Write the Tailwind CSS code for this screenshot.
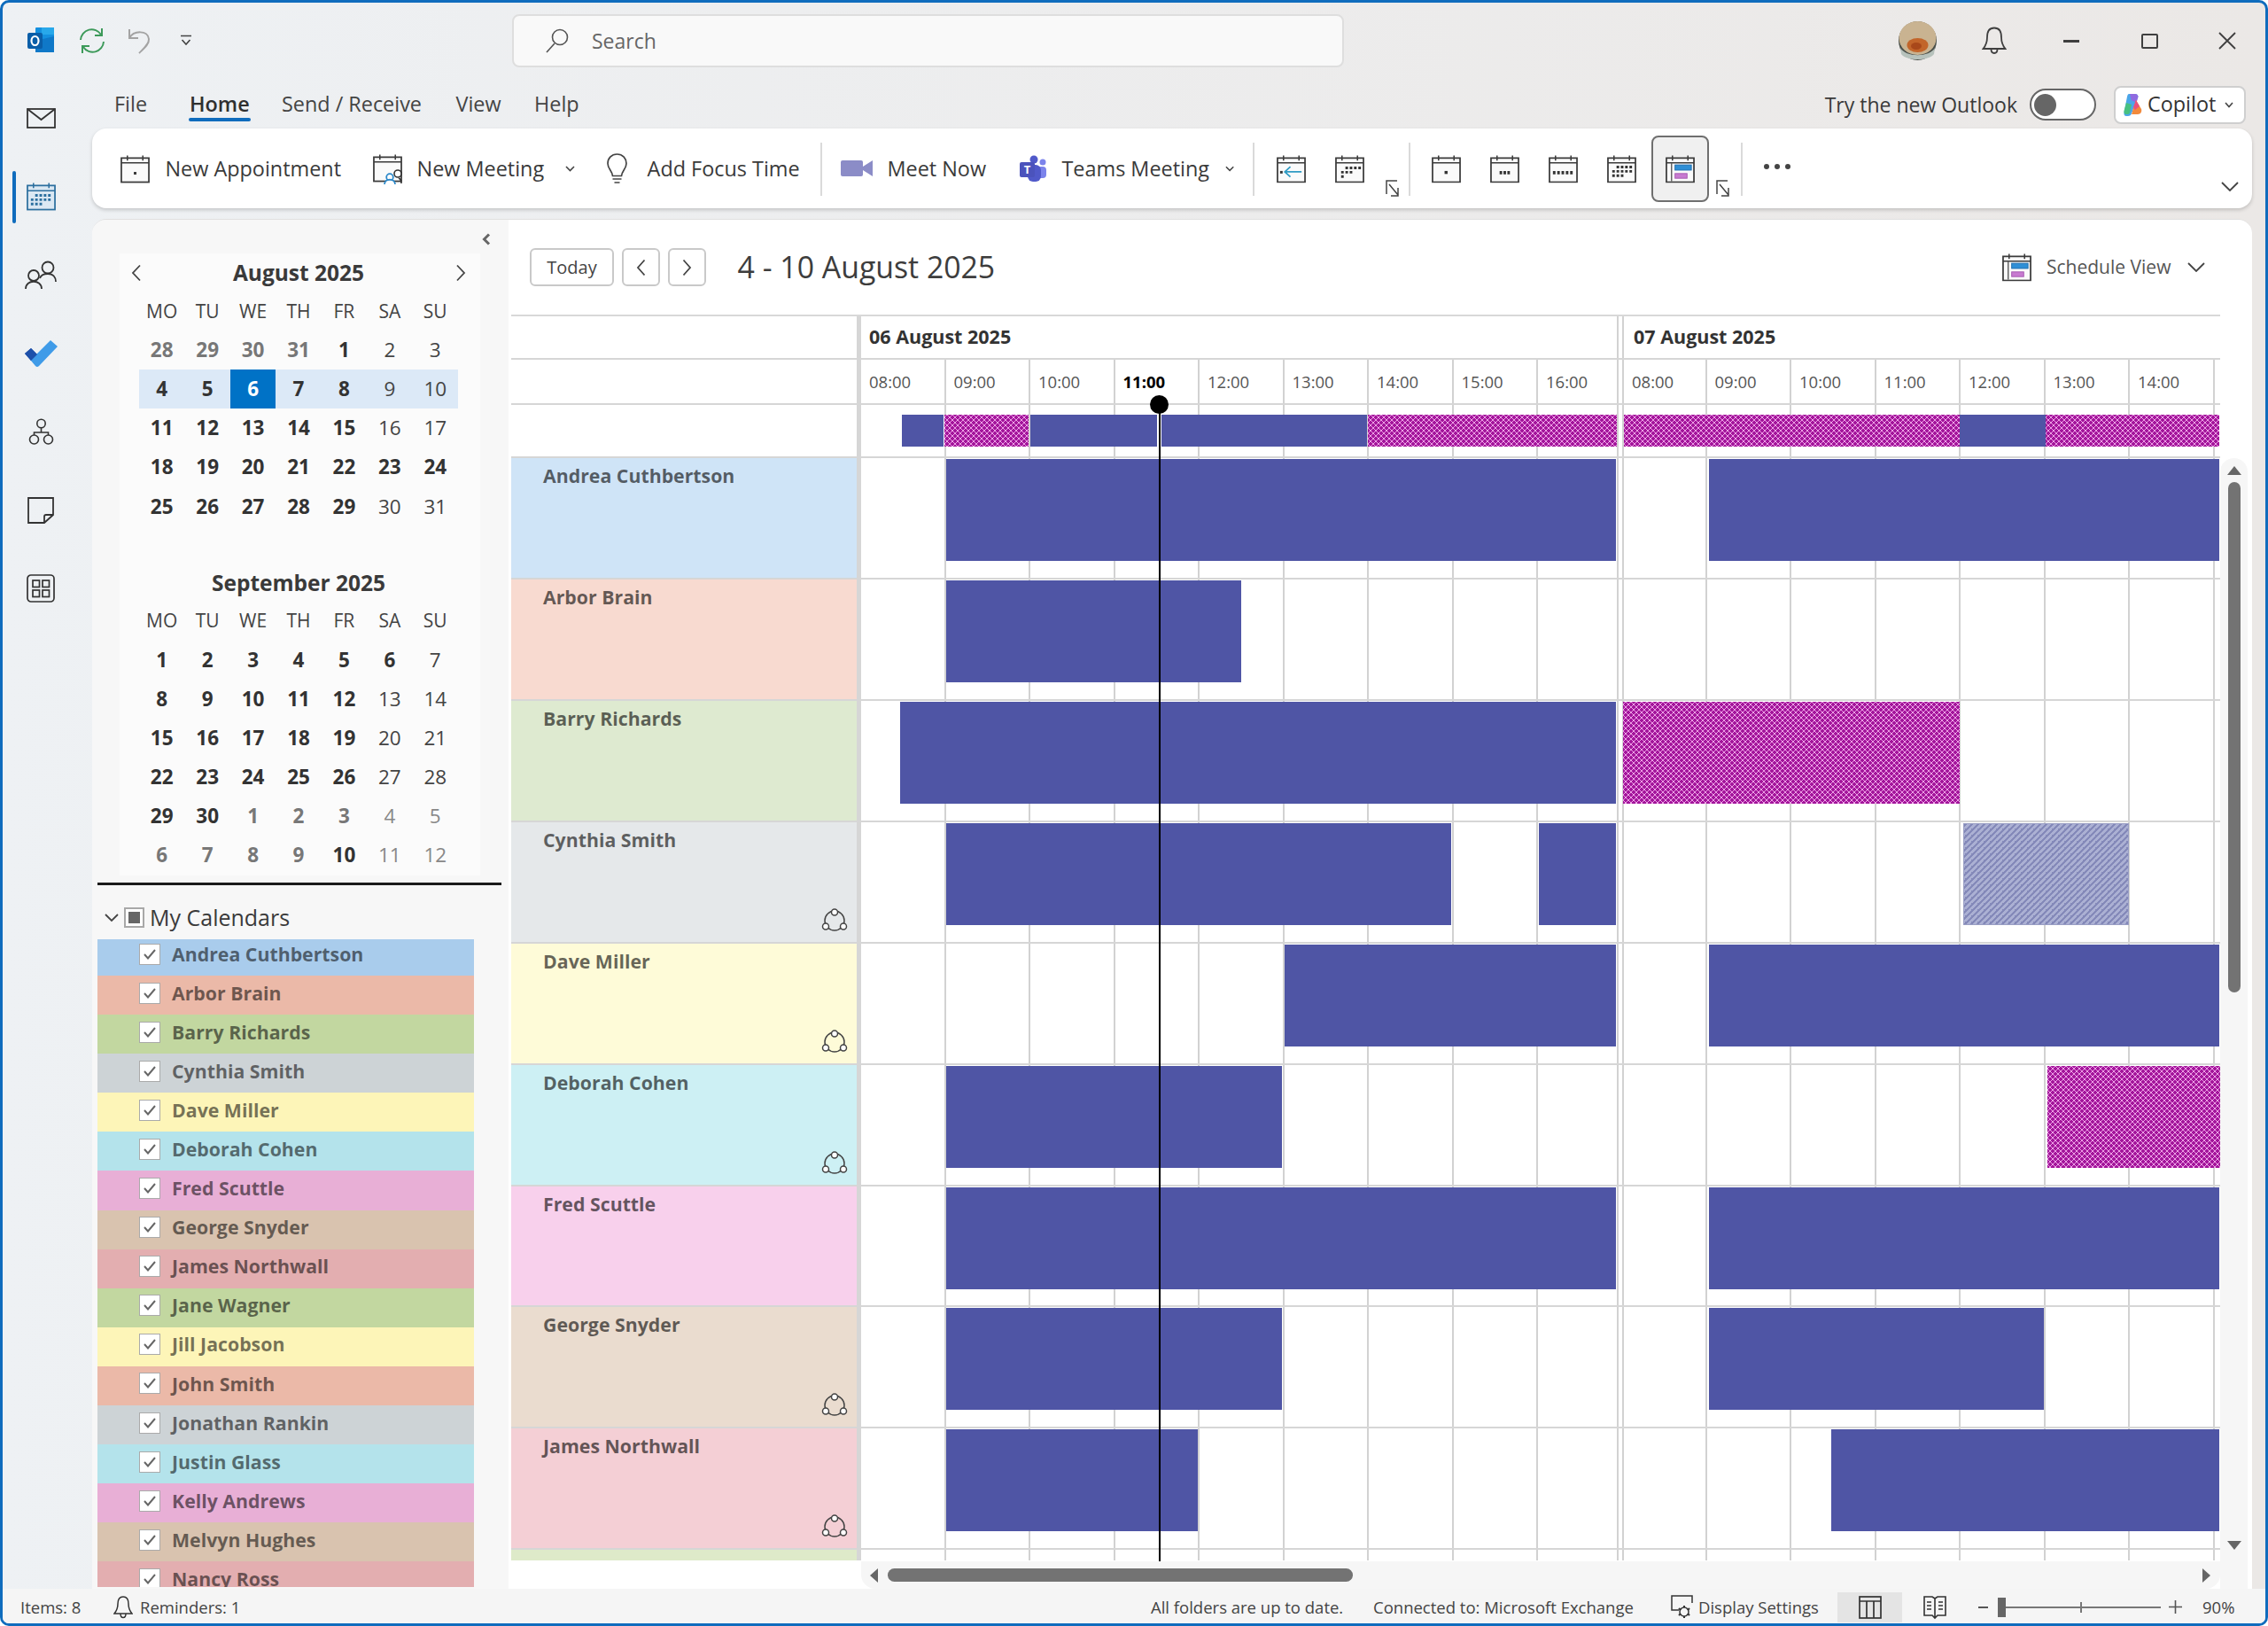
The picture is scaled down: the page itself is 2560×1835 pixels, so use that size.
<!DOCTYPE html>
<html lang="en">
<head>
  <meta charset="UTF-8">
  <title>Calendar - Outlook</title>
  <script src="https://cdn.jsdelivr.net/npm/@tailwindcss/browser@4"></script>
</head>
<body class="bg-white">
  <!-- shared calendar frame for the ribbon icons -->
  <svg class="hidden">
    <symbol id="cal" viewBox="0 0 34 33">
      <rect x="1" y="4" width="32" height="28" fill="#fafafa" stroke="#3b3b3b" stroke-width="1.8"/>
      <path d="M1 9.5h32M8 1v6M26 1v6" fill="none" stroke="#3b3b3b" stroke-width="1.6"/>
    </symbol>
  </svg>

  <div class="w-[2560px] h-[1835px] border-[3px] border-[#0f6cbd] rounded-[10px] overflow-hidden flex flex-col bg-linear-to-r from-[#eef1f4] to-[#ebe8e6] text-[#3a3a3a] [font-family:'Open_Sans','Noto_Sans',sans-serif]">

    <!-- title bar -->
    <div class="h-[86px] shrink-0 flex items-center">
      <svg class="ml-[28px] w-[30px] h-[30px]" viewBox="0 0 30 30">
        <rect x="9" y="0" width="21" height="28" rx="1" fill="#1490df"/>
        <rect x="16" y="0" width="14" height="8" fill="#28a8ea"/>
        <path d="M9 15l21-5v18H9z" fill="#0f78c8"/>
        <rect x="0" y="6" width="17" height="18" rx="2" fill="#0a5ea8"/>
        <ellipse cx="8.5" cy="15" rx="4" ry="5" fill="none" stroke="#fff" stroke-width="2.2"/>
      </svg>
      <svg class="ml-[28px] w-[30px] h-[30px]" viewBox="0 0 30 30" fill="none" stroke="#3d9a5a" stroke-width="2">
        <path d="M2 14a12.500 12.500 0 0 1 23-6M28 16a12.500 12.500 0 0 1-23 6"/>
        <path d="M26 1v8h-8M4 29v-8h8"/>
      </svg>
      <svg class="ml-[25px] w-[26px] h-[30px]" viewBox="0 0 26 30" fill="none" stroke="#a3a3a3" stroke-width="2">
        <path d="M2 2v10h10M2 12C7 3 23 3 24 13c.5 6-6 11-11 16"/>
      </svg>
      <svg class="ml-[33px] w-[14px] h-[14px]" viewBox="0 0 14 14" fill="none" stroke="#444" stroke-width="1.6">
        <path d="M1 1.500h12M2.500 6l4.500 5 4.500-5"/>
      </svg>
      <div class="ml-[361px] w-[939px] h-[60px] flex items-center bg-[#f9f9f9] border-2 border-[#dedede] rounded-lg">
        <svg class="ml-[35px] w-[28px] h-[28px]" viewBox="0 0 28 28" fill="none" stroke="#555" stroke-width="1.6">
          <circle cx="17" cy="10" r="8.500"/>
          <path d="M11 17L2 27"/>
        </svg>
        <span class="ml-[25px] text-[23px] text-[#666]">Search</span>
      </div>
      <svg class="ml-[626px] w-[43px] h-[44px]" viewBox="0 0 43 44">
        <ellipse cx="21.500" cy="22" rx="21.500" ry="22" fill="#4a4f4a"/>
        <ellipse cx="21.500" cy="19" rx="21" ry="19" fill="#c9b391"/>
        <ellipse cx="21.500" cy="27" rx="12" ry="8" fill="#c2652a"/>
        <ellipse cx="20" cy="28" rx="6" ry="4" fill="#a8481a"/>
        <path d="M2 30c6 11 33 11 39 0l-1 7c-6 8-31 8-37 0z" fill="#b7c2bc"/>
      </svg>
      <svg class="ml-[51px] w-[28px] h-[32px]" viewBox="0 0 28 32" fill="none" stroke="#3f3f3f" stroke-width="1.800">
        <path d="M14 1.500C8 1.500 6 6 6 12c0 6-2 10-4.500 13h25C24 22 22 18 22 12c0-6-2-10.500-8-10.500z"/>
        <path d="M10.500 25.500c0 6 7 6 7 0"/>
      </svg>
      <div class="ml-[64px] w-[18px] h-[3px] bg-[#3f3f3f]"></div>
      <div class="ml-[70px] w-[19px] h-[17px] rounded-[2px] border-2 border-[#3f3f3f]"></div>
      <svg class="ml-[68px] w-[20px] h-[20px]" viewBox="0 0 20 20" stroke="#3f3f3f" stroke-width="1.800">
        <path d="M1 1l18 18M19 1L1 19"/>
      </svg>
    </div>

    <div class="flex h-[1704px] shrink-0">
      <!-- app rail -->
      <div class="w-[101px] shrink-0 flex flex-col">
        <div class="w-[86px] h-[88.5px] flex items-center justify-center">
          <svg class="w-[33px] h-[23px]" viewBox="0 0 33 23" fill="none" stroke="#333" stroke-width="1.800">
            <rect x="1" y="1" width="31" height="21"/>
            <path d="M1 1l15.500 12L32 1"/>
          </svg>
        </div>
        <div class="relative w-[86px] h-[88.5px] flex items-center justify-center">
          <div class="absolute left-[11px] top-[15px] w-[4px] h-[59px] rounded bg-[#0f6cbd]"></div>
          <svg class="w-[33px] h-[33px]" viewBox="0 0 34 33">
            <rect x="1" y="4" width="32" height="28" fill="#dbe8f3" stroke="#2c6f9f" stroke-width="1.800"/>
            <path d="M1 10h32M8 1v6M26 1v6" stroke="#2c6f9f" stroke-width="1.600"/>
            <path d="M10 14h3v3h-3zM15 14h3v3h-3zM20 14h3v3h-3zM25 14h3v3h-3zM5 19h3v3H5zM10 19h3v3h-3zM15 19h3v3h-3zM20 19h3v3h-3zM25 19h3v3h-3zM5 24h3v3H5zM10 24h3v3h-3zM15 24h3v3h-3z" fill="#2c6f9f"/>
          </svg>
        </div>
        <div class="w-[86px] h-[88.5px] flex items-center justify-center">
          <svg class="w-[36px] h-[33px]" viewBox="0 0 36 33" fill="none" stroke="#333" stroke-width="1.800">
            <circle cx="10" cy="17" r="6"/>
            <path d="M1 32c0-11 18-11 18 0"/>
            <circle cx="26" cy="8" r="6.500"/>
            <path d="M17 20c1-3 4-5 9-5 6 0 9 4 9 9"/>
          </svg>
        </div>
        <div class="w-[86px] h-[88.5px] flex items-center justify-center">
          <svg class="w-[37px] h-[30px]" viewBox="0 0 37 30">
            <path d="M0 15l7-6 7 7-7 7z" fill="#1d4fa8"/>
            <path d="M7 23l-1 0 7-7L29 0l8 7-21 22a3 3 0 0 1-4 0z" fill="#3f9be8"/>
            <path d="M7 9l7 7-7 7-7-8z" fill="#1d50aa"/>
          </svg>
        </div>
        <div class="w-[86px] h-[88.5px] flex items-center justify-center">
          <svg class="w-[29px] h-[30px]" viewBox="0 0 29 30" fill="none" stroke="#333" stroke-width="1.600">
            <circle cx="14.500" cy="6" r="4.700"/>
            <circle cx="6.500" cy="24" r="5"/>
            <circle cx="22.500" cy="24" r="5"/>
            <path d="M14.500 11v5M6.500 19v-3h16v3"/>
          </svg>
        </div>
        <div class="w-[86px] h-[88.5px] flex items-center justify-center">
          <svg class="w-[30px] h-[30px]" viewBox="0 0 30 30" fill="none" stroke="#333" stroke-width="1.800">
            <path d="M1 1h28v19L19 29H1z"/>
            <path d="M29 20h-8c-2 0-2 1-2 2v7"/>
          </svg>
        </div>
        <div class="w-[86px] h-[88.5px] flex items-center justify-center">
          <svg class="w-[32px] h-[32px]" viewBox="0 0 32 32" fill="none" stroke="#333" stroke-width="1.700">
            <rect x="1" y="1" width="30" height="30" rx="4"/>
            <rect x="7" y="7" width="7.500" height="7.500"/>
            <rect x="18" y="7" width="7.500" height="7.500"/>
            <rect x="7" y="18" width="7.500" height="7.500"/>
            <rect x="18" y="18" width="7.500" height="7.500"/>
          </svg>
        </div>
      </div>

      <div class="w-[2438px] shrink-0 flex flex-col">
        <!-- tabs -->
        <div class="h-[56px] shrink-0 flex items-center pl-[25px] pr-[7px] pt-[2px] text-[23.400px] text-[#444]">
          <div class="w-[85px]">File</div>
          <div class="relative w-[104px] font-semibold text-[#2f2f2f]">Home
            <div class="absolute left-[-1px] top-[33px] w-[70px] h-[4px] rounded bg-[#0f6cbd]"></div>
          </div>
          <div class="w-[196.500px]">Send / Receive</div>
          <div class="w-[88.500px]">View</div>
          <div>Help</div>
          <div class="ml-auto text-[23px] text-[#3a3a3a]">Try the new Outlook</div>
          <div class="ml-[14px] w-[75px] h-[36px] rounded-full border-2 border-[#666] bg-white flex items-center pl-[3px]">
            <div class="w-[25px] h-[25px] rounded-full bg-[#666]"></div>
          </div>
          <div class="ml-[20px] w-[149px] h-[43px] rounded-lg border-2 border-[#cfcfcf] bg-white flex items-center pl-[9px]">
            <svg class="w-[21px] h-[27px]" viewBox="0 0 21 27">
              <path d="M6 1h7c2 0 3 1 3.500 3L9 23c-.5 2-2 3-4 3H3c-2 0-3-2-2.500-4L4 4c.5-2 1-3 2-3z" fill="#4aa6e8"/>
              <path d="M3 24c-2 0-3-2-2.500-4L3 11l6 2-2 9c-.5 2-2 2-4 2z" fill="#47c080"/>
              <path d="M7 1h6c2 0 3 1 3.500 3l-2 7-6-3z" fill="#8f6ae0"/>
              <path d="M14 8l6 10c1 3-1 6-4 6h-7l2-7z" fill="#f28a3c"/>
              <path d="M14 8l4 7-5 4-2-3z" fill="#e8507e"/>
            </svg>
            <span class="ml-[6px] text-[#333]">Copilot</span>
            <svg class="ml-[10px] w-[10px] h-[7px]" viewBox="0 0 10 7" fill="none" stroke="#444" stroke-width="1.600"><path d="M1 1l4 4.500L9 1"/></svg>
          </div>
        </div>

        <!-- ribbon -->
        <div class="h-[90px] shrink-0 bg-white rounded-2xl shadow-[0_2px_4px_rgba(0,0,0,0.18)] flex items-center pl-[32px] pt-[1px] whitespace-nowrap text-[23.400px] text-[#3a3a3a]">
          <div class="w-[285px] flex items-center gap-[17.500px]">
            <svg class="w-[33px] h-[33px]"><use href="#cal"/><rect x="15" y="20" width="3" height="3" fill="#3b3b3b"/></svg>
            <span>New Appointment</span>
          </div>
          <div class="w-[263.600px] flex items-center gap-[13.600px] pr-[35.600px]">
            <svg class="w-[36px] h-[35px] shrink-0" viewBox="0 0 36 35">
              <use href="#cal" width="33" height="33"/>
              <circle cx="28" cy="23" r="4" fill="#fff" stroke="#333" stroke-width="1.600"/>
              <path d="M32 34c0-2-1-5-3-6" fill="none" stroke="#333" stroke-width="1.600"/>
              <circle cx="19" cy="27" r="3.800" fill="#fff" stroke="#2b88c9" stroke-width="1.800"/>
              <path d="M13 35c0-7 12-7 12 0" fill="#fff" stroke="#2b88c9" stroke-width="1.800"/>
            </svg>
            <span class="flex-1">New Meeting</span>
            <svg class="w-[11px] h-[7px]" viewBox="0 0 11 7" fill="none" stroke="#444" stroke-width="1.600"><path d="M1 1l4.500 4.500L10 1"/></svg>
          </div>
          <div class="w-[241.400px] flex items-center gap-[23px]">
            <svg class="w-[23px] h-[34px]" viewBox="0 0 23 34" fill="none" stroke="#444" stroke-width="1.700">
              <path d="M11.500 1C5 1 1 6 1 11.500c0 6 5 8 5.500 14h10c.5-6 5.500-8 5.500-14C22 6 18 1 11.500 1z"/>
              <path d="M6.500 29h10M8.500 33h6"/>
            </svg>
            <span>Add Focus Time</span>
          </div>
          <div class="w-[2px] h-[60px] bg-[#dadada]"></div>
          <div class="ml-[21px] w-[201.700px] flex items-center gap-[16.500px]">
            <svg class="w-[36px] h-[18px]" viewBox="0 0 36 18">
              <rect x="0" y="0" width="25" height="18" rx="2" fill="#8b8cc7"/>
              <path d="M25 7l11-7v18L25 11z" fill="#8b8cc7"/>
            </svg>
            <span>Meet Now</span>
          </div>
          <div class="w-[263.300px] flex items-center gap-[17.800px] pr-[21px]">
            <svg class="w-[30px] h-[30px] shrink-0" viewBox="0 0 30 30">
              <circle cx="26" cy="8" r="3.500" fill="#7b83eb"/>
              <rect x="20" y="13" width="10" height="13" rx="4" fill="#7b83eb"/>
              <circle cx="16" cy="5" r="4.500" fill="#5059c9"/>
              <rect x="9" y="11" width="15" height="19" rx="6" fill="#5059c9"/>
              <rect x="0" y="8" width="17" height="17" rx="2" fill="#4b53bc"/>
              <text x="8.500" y="21" text-anchor="middle" font-size="13" font-weight="700" fill="#fff">T</text>
            </svg>
            <span class="flex-1">Teams Meeting</span>
            <svg class="w-[11px] h-[7px]" viewBox="0 0 11 7" fill="none" stroke="#444" stroke-width="1.600"><path d="M1 1l4.500 4.500L10 1"/></svg>
          </div>
          <div class="w-[2px] h-[60px] bg-[#dadada]"></div>
          <svg class="ml-[25px] w-[33px] h-[33px]" viewBox="0 0 34 33">
            <use href="#cal"/>
            <path d="M29 20H10M16 14l-6.500 6 6.500 6" fill="none" stroke="#2f9bc4" stroke-width="1.800"/>
            <rect x="4" y="19" width="3" height="3" fill="#333"/>
          </svg>
          <svg class="ml-[33px] w-[33px] h-[33px]" viewBox="0 0 34 33">
            <use href="#cal"/>
            <path d="M12 14h3v3h-3zM17 14h3v3h-3zM22 14h3v3h-3zM27 14h3v3h-3zM7 19h3v3H7zM12 19h3v3h-3zM17 19h3v3h-3zM7 24h3v3H7z" fill="#333"/>
          </svg>
          <svg class="ml-[24px] mt-[46px] w-[16px] h-[22px]" viewBox="0 0 16 22" fill="none" stroke="#444" stroke-width="1.500">
            <path d="M1 16V1h12M4 5l10 12M14 9v9H6"/>
          </svg>
          <div class="ml-[10px] w-[2px] h-[60px] bg-[#dadada]"></div>
          <svg class="ml-[24px] w-[33px] h-[33px]" viewBox="0 0 34 33">
            <use href="#cal"/>
            <rect x="15" y="19" width="3.500" height="3.500" fill="#333"/>
          </svg>
          <svg class="ml-[33.500px] w-[33px] h-[33px]" viewBox="0 0 34 33">
            <use href="#cal"/>
            <path d="M11 19h3v4h-3zM15.500 19h3v4h-3zM20 19h3v4h-3z" fill="#333"/>
          </svg>
          <svg class="ml-[32.500px] w-[33px] h-[33px]" viewBox="0 0 34 33">
            <use href="#cal"/>
            <path d="M5 19h3v4H5zM10 19h3v4h-3zM15 19h3v4h-3zM20 19h3v4h-3zM25 19h3v4h-3z" fill="#333"/>
          </svg>
          <svg class="ml-[33.500px] w-[33px] h-[33px]" viewBox="0 0 34 33">
            <use href="#cal"/>
            <path d="M11 13h3v3h-3zM16 13h3v3h-3zM21 13h3v3h-3zM26 13h3v3h-3zM6 18h3v3H6zM11 18h3v3h-3zM16 18h3v3h-3zM21 18h3v3h-3zM26 18h3v3h-3zM6 23h3v3H6zM11 23h3v3h-3zM16 23h3v3h-3z" fill="#333"/>
          </svg>
          <div class="ml-[17px] w-[65px] h-[75px] rounded-lg border-2 border-[#6f6f6f] bg-[#f0f0f0] flex items-center justify-center">
            <svg class="w-[33px] h-[33px]" viewBox="0 0 34 33">
              <use href="#cal"/>
              <path d="M7 10v21" stroke="#3b3b3b" stroke-width="1.200"/>
              <rect x="11" y="12" width="19" height="6" fill="#2f8fd6" stroke="#1f6fb0"/>
              <rect x="11" y="22" width="14" height="5.500" fill="#c77ad0" stroke="#a85bb2"/>
            </svg>
          </div>
          <svg class="ml-[7.600px] mt-[46px] w-[16px] h-[22px]" viewBox="0 0 16 22" fill="none" stroke="#444" stroke-width="1.500">
            <path d="M1 16V1h12M4 5l10 12M14 9v9H6"/>
          </svg>
          <div class="ml-[12.400px] w-[2px] h-[60px] bg-[#dadada]"></div>
          <div class="ml-[23.600px] w-[30px] flex justify-between mb-[6px]">
            <div class="w-[6px] h-[6px] rounded-full bg-[#444]"></div>
            <div class="w-[6px] h-[6px] rounded-full bg-[#444]"></div>
            <div class="w-[6px] h-[6px] rounded-full bg-[#444]"></div>
          </div>
          <svg class="ml-auto mr-[15px] mt-[40px] w-[20px] h-[11px]" viewBox="0 0 20 11" fill="none" stroke="#444" stroke-width="1.800"><path d="M1 1l9 9 9-9"/></svg>
        </div>

        <!-- panel -->
        <div class="mt-[12px] flex-1 min-h-0 flex rounded-t-2xl overflow-hidden border-t border-[#e0e0e0]">
          <!-- left pane -->
          <div class="w-[470px] shrink-0 bg-[#f7f7f7] overflow-hidden flex flex-col">
            <div class="h-[38px] shrink-0 flex justify-end items-center pr-[20px] pt-[6px]">
              <svg class="w-[10px] h-[14px]" viewBox="0 0 10 14" fill="none" stroke="#666" stroke-width="3"><path d="M8 1.500L2.500 7 8 12.500"/></svg>
            </div>
            <div class="ml-[31px] w-[407px] h-[702px] shrink-0 bg-[#fbfbfb] pl-[22px] pr-[25px] text-[#3a3a3a]">
              <div class="h-[44px] ml-[-9px] mr-[-9px] flex items-center justify-between">
                <svg class="w-[12px] h-[20px]" viewBox="0 0 12 20" fill="none" stroke="#444" stroke-width="1.800"><path d="M10 1.500L2 10l8 8.500"/></svg>
                <span class="text-[24.500px] font-bold">August 2025</span>
                <svg class="w-[12px] h-[20px]" viewBox="0 0 12 20" fill="none" stroke="#444" stroke-width="1.800"><path d="M2 1.500L10 10l-8 8.500"/></svg>
              </div>
              <div id="aug"></div>
              <div class="mt-[44px] h-[42px] flex items-center justify-center text-[24.500px] font-bold">September 2025</div>
              <div id="sep"></div>
            </div>
            <div class="ml-[6px] mt-[8px] w-[456px] h-[3px] shrink-0 bg-[#1a1a1a]"></div>
            <div class="h-[61px] shrink-0 flex items-center pl-[14px] pt-[12px]">
              <svg class="w-[16px] h-[10px]" viewBox="0 0 16 10" fill="none" stroke="#444" stroke-width="1.800"><path d="M1 1l7 7 7-7"/></svg>
              <div class="ml-[6px] w-[23px] h-[23px] border-2 border-[#a8a8a8] bg-white flex items-center justify-center">
                <div class="w-[13px] h-[13px] bg-[#666]"></div>
              </div>
              <span class="ml-[6px] text-[25px] text-[#3a3a3a]">My Calendars</span>
            </div>
            <div id="calendars" class="ml-[6px] w-[425px] h-[731px] overflow-hidden"></div>
          </div>

          <!-- schedule pane -->
          <div class="flex-1 bg-white flex flex-col min-w-0">
            <div class="h-[107px] shrink-0 flex items-center pl-[24px] pr-[53px]">
              <div class="w-[95px] h-[43px] rounded-md border-2 border-[#c9c9c9] flex items-center justify-center text-[20px] text-[#444]">Today</div>
              <div class="ml-[8.600px] w-[43px] h-[43px] rounded-md border-2 border-[#c9c9c9] flex items-center justify-center">
                <svg class="w-[11px] h-[20px]" viewBox="0 0 11 20" fill="none" stroke="#444" stroke-width="1.800"><path d="M9.500 1.500L2 10l7.500 8.500"/></svg>
              </div>
              <div class="ml-[9px] w-[43px] h-[43px] rounded-md border-2 border-[#c9c9c9] flex items-center justify-center">
                <svg class="w-[11px] h-[20px]" viewBox="0 0 11 20" fill="none" stroke="#444" stroke-width="1.800"><path d="M1.500 1.500L9 10l-7.500 8.500"/></svg>
              </div>
              <div class="ml-[36px] text-[33.800px] text-[#3d3d3d] font-medium">4 - 10 August 2025</div>
              <svg class="ml-auto w-[33px] h-[33px]" viewBox="0 0 34 33">
                <use href="#cal"/>
                <path d="M7 10v21" stroke="#3b3b3b" stroke-width="1.200"/>
                <rect x="11" y="12" width="19" height="6" fill="#2f8fd6" stroke="#1f6fb0"/>
                <rect x="11" y="22" width="14" height="5.500" fill="#c77ad0" stroke="#a85bb2"/>
              </svg>
              <span class="ml-[17px] w-[159px] text-[21px] text-[#555]">Schedule View</span>
              <svg class="w-[20px] h-[11px]" viewBox="0 0 20 11" fill="none" stroke="#444" stroke-width="1.800"><path d="M1 1l9 9 9-9"/></svg>
            </div>

            <div class="flex flex-1 min-h-0 pl-[3px]">
              <div class="w-[1929px] shrink-0 flex flex-col">
                <div id="grid" class="relative h-[1407px] shrink-0 overflow-hidden border-t-2 border-[#d8d8d8]"></div>
                <!-- horizontal scrollbar -->
                <div class="ml-[395px] h-[31px] rounded-b-2xl bg-[#f6f6f6] flex items-center">
                  <div class="ml-[10px] w-0 h-0 border-y-[8px] border-y-transparent border-r-[9px] border-r-[#666]"></div>
                  <div class="ml-[11px] w-[525px] h-[15px] rounded-full bg-[#737373]"></div>
                  <div class="ml-auto mr-[11px] w-0 h-0 border-y-[8px] border-y-transparent border-l-[9px] border-l-[#666]"></div>
                </div>
              </div>
              <!-- vertical scrollbar -->
              <div class="w-[31px] shrink-0 mt-[162px] rounded-t-full bg-[#f6f6f6] flex flex-col items-center">
                <div class="mt-[9px] w-0 h-0 border-x-[8px] border-x-transparent border-b-[10px] border-b-[#666]"></div>
                <div class="mt-[8px] w-[14px] h-[576px] rounded-full bg-[#737373]"></div>
                <div class="mt-[619px] w-0 h-0 border-x-[8px] border-x-transparent border-t-[10px] border-t-[#666]"></div>
              </div>
            </div>
          </div>
        </div>
      </div>
    </div>

    <!-- status bar -->
    <div class="flex-1 bg-[#f5f5f5] flex items-center pl-[20px] pt-[2px] text-[18.500px] text-[#444]">
      <div class="w-[105px]">Items: 8</div>
      <svg class="w-[22px] h-[26px]" viewBox="0 0 22 26" fill="none" stroke="#333" stroke-width="1.500">
        <path d="M11 1C6 1 5 5 5 9c0 5-1.500 8-4 11h20c-2.500-3-4-6-4-11 0-4-1-8-6-8z"/>
        <path d="M8 20c0 6 6 6 6 0"/>
      </svg>
      <div class="ml-[8px] w-[1141px]">Reminders: 1</div>
      <div class="w-[251px]">All folders are up to date.</div>
      <div class="w-[336px]">Connected to: Microsoft Exchange</div>
      <svg class="w-[25px] h-[28px]" viewBox="0 0 25 28" fill="none" stroke="#333" stroke-width="1.500">
        <path d="M9 17H1V1h23v8"/>
        <circle cx="15" cy="19" r="5"/>
        <path d="M15 12v2M15 24v2M9 15l2 2M19 21l2 2M9 23l2-2M19 17l2-2" stroke-width="2"/>
      </svg>
      <div class="ml-[6px] w-[157px]">Display Settings</div>
      <div class="w-[73px] h-[34px] bg-[#e4e4e4] flex items-center justify-center">
        <svg class="w-[26px] h-[26px]" viewBox="0 0 26 26" fill="none" stroke="#333" stroke-width="1.700">
          <rect x="1" y="1" width="24" height="24"/>
          <path d="M1 6h24M9 6v19M17 6v19"/>
        </svg>
      </div>
      <svg class="ml-[24px] w-[26px] h-[28px]" viewBox="0 0 26 28" fill="none" stroke="#333" stroke-width="1.600">
        <path d="M1 2h9l3 2 3-2h9v21h-9l-3 3-3-3H1zM13 4v22"/>
        <path d="M4 8h5M4 12h5M4 16h5M17 8h5M17 12h5M17 16h5"/>
      </svg>
      <div class="ml-[36px] w-[11px] h-[2px] bg-[#555]"></div>
      <div class="relative ml-[11px] w-[184px] h-[2px] bg-[#777]">
        <div class="absolute left-0 top-[-10px] w-[9px] h-[22px] bg-[#666]"></div>
        <div class="absolute left-[93px] top-[-5px] w-[2px] h-[12px] bg-[#777]"></div>
      </div>
      <svg class="ml-[9px] w-[15px] h-[15px]" viewBox="0 0 15 15" stroke="#555" stroke-width="1.600"><path d="M0 7.500h15M7.500 0v15"/></svg>
      <div class="ml-[23px]">90%</div>
    </div>
  </div>

  <script>
    // mini calendars: b bold, r regular, g grey bold, l light, t today
    const august = [
      ['28g','29g','30g','31g','1b','2r','3r'],
      ['4b','5b','6t','7b','8b','9r','10r'],
      ['11b','12b','13b','14b','15b','16r','17r'],
      ['18b','19b','20b','21b','22b','23b','24b'],
      ['25b','26b','27b','28b','29b','30r','31r'],
    ];
    const september = [
      ['1b','2b','3b','4b','5b','6b','7r'],
      ['8b','9b','10b','11b','12b','13r','14r'],
      ['15b','16b','17b','18b','19b','20r','21r'],
      ['22b','23b','24b','25b','26b','27r','28r'],
      ['29b','30b','1g','2g','3g','4l','5l'],
      ['6g','7g','8g','9g','10b','11l','12l'],
    ];
    const dayStyle = {
      b: 'font-bold text-[#333]',
      r: 'text-[#444]',
      g: 'font-bold text-[#777]',
      l: 'text-[#888]',
      t: 'font-bold text-white bg-[#0072c6]',
    };

    function monthHtml(weeks, currentRow) {
      const head = ['MO','TU','WE','TH','FR','SA','SU']
        .map(d => `<div class="h-[43px] flex items-center justify-center text-[21px] text-[#444]">${d}</div>`).join('');
      const days = weeks.map((w, i) => w.map(c => {
        const kind = c.slice(-1);
        const bg = i === currentRow && kind !== 't' ? 'bg-[#dce9f7]' : '';
        return `<div class="h-[44.100px] flex items-center justify-center text-[22.500px] ${bg} ${dayStyle[kind]}">${c.slice(0, -1)}</div>`;
      }).join('')).join('');
      return `<div class="grid grid-cols-7">${head}${days}</div>`;
    }
    document.getElementById('aug').innerHTML = monthHtml(august, 1);
    document.getElementById('sep').innerHTML = monthHtml(september, -1);

    // calendar list
    const calendars = [
      ['Andrea Cuthbertson','bg-[#a9ccec]'],['Arbor Brain','bg-[#ebb9a8]'],['Barry Richards','bg-[#c2d7a0]'],
      ['Cynthia Smith','bg-[#cdd3d6]'],['Dave Miller','bg-[#fdf5b8]'],['Deborah Cohen','bg-[#b4e3eb]'],
      ['Fred Scuttle','bg-[#e8afd6]'],['George Snyder','bg-[#d9c3af]'],['James Northwall','bg-[#e3aeb0]'],
      ['Jane Wagner','bg-[#c2d7a0]'],['Jill Jacobson','bg-[#fdf5b8]'],['John Smith','bg-[#ebb9a8]'],
      ['Jonathan Rankin','bg-[#cdd3d6]'],['Justin Glass','bg-[#b4e3eb]'],['Kelly Andrews','bg-[#e8afd6]'],
      ['Melvyn Hughes','bg-[#d9c3af]'],['Nancy Ross','bg-[#e3aeb0]'],
    ];
    document.getElementById('calendars').innerHTML = calendars.map(([name, bg], i) => `
      <div class="${bg} ${i === 0 ? 'h-[41px] pb-[8px]' : 'h-[44.100px] pb-[5px]'} flex items-center pl-[47px]">
        <div class="w-[24px] h-[24px] shrink-0 bg-white border border-[#aaa] flex items-center justify-center">
          <svg class="w-[14px] h-[12px]" viewBox="0 0 14 12" fill="none" stroke="#666" stroke-width="2"><path d="M1 6l4 4.500L13 1"/></svg>
        </div>
        <span class="ml-[13px] text-[21.300px] font-bold text-black/55">${name}</span>
      </div>`).join('');

    // schedule grid
    const bar = 'bg-[#4f55a5]';
    const pink = '[background:radial-gradient(circle,#a3159b_1.6px,transparent_2px)_0_0/6px_6px,radial-gradient(circle,#a3159b_1.6px,transparent_2px)_3px_3px/6px_6px,#eda0e6]';
    const hatch = 'border border-[#9a9fc4] [background:linear-gradient(135deg,#8489b9_25%,#abb0d3_25%,#abb0d3_50%,#8489b9_50%,#8489b9_75%,#abb0d3_75%)_0_0/7px_7px]';
    const people = [
      {name:'Andrea Cuthbertson', bg:'bg-[#cfe4f7]', bars:[[1068,1824,bar],[1929,2505,bar]]},
      {name:'Arbor Brain', bg:'bg-[#f8dad0]', bars:[[1068,1401,bar]]},
      {name:'Barry Richards', bg:'bg-[#deead0]', bars:[[1016,1824,bar],[1832,2212,pink]]},
      {name:'Cynthia Smith', bg:'bg-[#e5e8ea]', shared:true, bars:[[1068,1638,bar],[1737,1824,bar],[2216,2403,hatch]]},
      {name:'Dave Miller', bg:'bg-[#fefbd8]', shared:true, bars:[[1450,1824,bar],[1929,2505,bar]]},
      {name:'Deborah Cohen', bg:'bg-[#cdf0f4]', shared:true, bars:[[1068,1447,bar],[2311,2506,pink]]},
      {name:'Fred Scuttle', bg:'bg-[#f8d0ec]', bars:[[1068,1824,bar],[1929,2505,bar]]},
      {name:'George Snyder', bg:'bg-[#eadccf]', shared:true, bars:[[1068,1447,bar],[1929,2307,bar]]},
      {name:'James Northwall', bg:'bg-[#f4cfd5]', shared:true, bars:[[1068,1352,bar],[2067,2505,bar]]},
    ];
    const summary = [[1018,1065,bar],[1066,1161,pink],[1163,1306,bar],[1311,1543,bar],[1544,1825,pink],[1833,2212,pink],[2212,2309,bar],[2309,2505,pink]];

    const originX = 972;
    function barsHtml(list, top, height) {
      return list.map(([from, to, cls]) =>
        `<div class="absolute ${cls}" style="left:${from - originX}px;width:${to - from}px;top:${top}px;height:${height}px"></div>`).join('');
    }

    // hour cells of both days; labels only in the header row
    function hourCells(labels) {
      const day1 = ['08:00','09:00','10:00','11:00','12:00','13:00','14:00','15:00'];
      const day2 = ['09:00','10:00','11:00','12:00','13:00','14:00','15:00'];
      const text = (t, now) => {
        if (!labels) return '';
        return `<span class="pl-[9px] pt-[11px] block text-[18.500px] ${now ? 'font-bold text-black' : 'text-[#555]'}">${t}</span>`;
      };
      const d1 = day1.map(t => `<div class="w-[95.500px] shrink-0 border-r-2 border-[#d2d2d2]">${text(t, t === '11:00')}</div>`).join('');
      const last = `<div class="w-[91px] shrink-0 border-r-2 border-[#d2d2d2]">${text('16:00')}</div><div class="w-[4px] shrink-0"></div>`;
      const first2 = `<div class="w-[95.500px] shrink-0 border-x-2 border-[#d2d2d2]">${text('08:00')}</div>`;
      const d2 = day2.map(t => `<div class="w-[95.500px] shrink-0 border-r-2 border-[#d2d2d2]">${text(t)}</div>`).join('');
      return d1 + last + first2 + d2;
    }

    const sharedIcon = `<svg class="absolute right-[10px] bottom-[10px] w-[30px] h-[28px]" viewBox="0 0 30 28" fill="none" stroke="#444" stroke-width="1.500">
      <circle cx="15" cy="14" r="11"/><circle cx="15" cy="4.500" r="3.500" fill="#fff"/><circle cx="5" cy="20.500" r="3.500" fill="#fff"/><circle cx="25" cy="20.500" r="3.500" fill="#fff"/></svg>`;

    const rowLine = 'border-b-2 border-[#d6d6d6]';
    let html = `
      <div class="flex h-[48.500px] ${rowLine}">
        <div class="w-[390px] shrink-0"></div>
        <div class="w-[5px] shrink-0 bg-[#d6d6d6]"></div>
        <div class="w-[855px] shrink-0 pl-[9px] border-r-2 border-[#d2d2d2] flex items-center text-[21.500px] font-bold text-[#333]">06 August 2025</div>
        <div class="w-[4px] shrink-0"></div>
        <div class="flex-1 pl-[11px] border-l-2 border-[#d2d2d2] flex items-center text-[21.500px] font-bold text-[#333]">07 August 2025</div>
      </div>
      <div class="flex h-[51px] ${rowLine}">
        <div class="w-[390px] shrink-0"></div>
        <div class="w-[5px] shrink-0 bg-[#d6d6d6]"></div>
        <div class="flex overflow-hidden flex-1">${hourCells(1)}</div>
      </div>
      <div class="flex h-[60.500px] ${rowLine}">
        <div class="w-[390px] shrink-0"></div>
        <div class="w-[5px] shrink-0 bg-[#d6d6d6]"></div>
        <div class="relative flex overflow-hidden flex-1">${hourCells(0)}${barsHtml(summary, 11, 36)}</div>
      </div>`;
    people.forEach(p => {
      html += `
      <div class="flex h-[136.930px] ${rowLine}">
        <div class="relative w-[390px] shrink-0 ${p.bg} pl-[36px] pt-[4px] text-[21.300px] font-bold text-black/60">${p.name}${p.shared ? sharedIcon : ''}</div>
        <div class="w-[5px] shrink-0 bg-[#d6d6d6]"></div>
        <div class="relative flex overflow-hidden flex-1">${hourCells(0)}${barsHtml(p.bars, 1, 115)}</div>
      </div>`;
    });
    html += `
      <div class="flex h-[12px]">
        <div class="w-[390px] shrink-0 bg-[#deeac9]"></div>
        <div class="w-[5px] shrink-0 bg-[#d6d6d6]"></div>
        <div class="flex overflow-hidden flex-1">${hourCells(0)}</div>
      </div>
      <div class="absolute left-[731px] top-[99px] bottom-0 w-[1.500px] bg-black"></div>
      <div class="absolute left-[721px] top-[89px] w-[21px] h-[21px] rounded-full bg-black"></div>`;
    document.getElementById('grid').innerHTML = html;
  </script>
</body>
</html>
